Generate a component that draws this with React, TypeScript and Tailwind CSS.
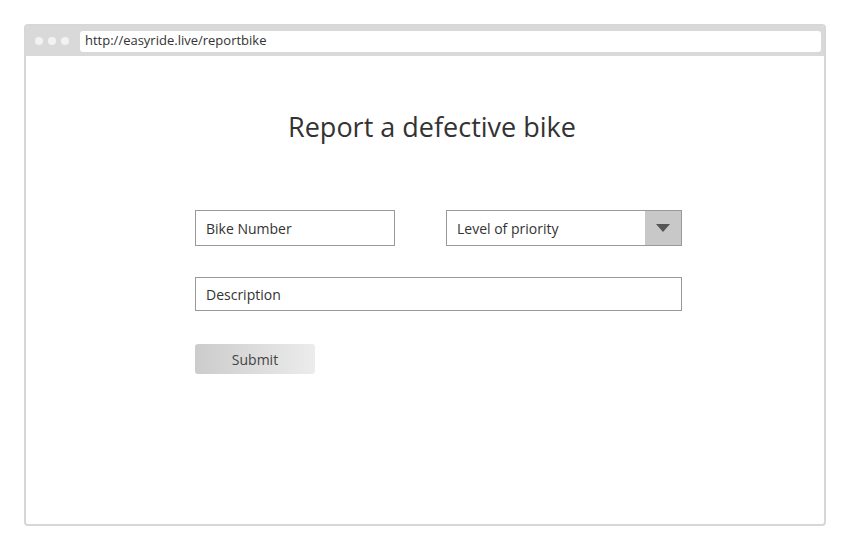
export default function App() {
  return (
    <div className="w-[850px] h-[550px] bg-white p-[24px]" style={{ fontFamily: '"Open Sans", "Noto Sans", sans-serif' }}>
      <div className="w-[802px] h-[502px] border-2 border-[#d7d7d7] rounded-[4px] flex flex-col overflow-hidden">
        <div className="h-[30px] bg-[#d9d9d9] flex items-center pl-[9px] pr-[3px] gap-[6px] shrink-0">
          <div className="flex gap-[5px]">
            <span className="w-[8px] h-[8px] rounded-full bg-[#f2f2f2]" />
            <span className="w-[8px] h-[8px] rounded-full bg-[#f2f2f2]" />
            <span className="w-[8px] h-[8px] rounded-full bg-[#f2f2f2]" />
          </div>
          <div className="ml-[5px] flex-1 h-[21px] bg-white rounded-[3px] flex items-center px-[5px] text-[13px] text-[#333]">
            http://easyride.live/reportbike
          </div>
        </div>
        <div className="flex-1 flex flex-col">
          <h1 className="mt-[51px] ml-[14px] text-center text-[27px] text-[#333] leading-[40px]">Report a defective bike</h1>
          <div className="ml-[169px] mt-[63px] w-[487px] flex flex-col text-[14px] text-[#333]">
            <div className="flex justify-between">
              <div className="w-[200px] h-[36px] border border-[#999] flex items-center px-[10px]">Bike Number</div>
              <div className="w-[236px] h-[36px] border border-[#999] flex">
                <div className="flex-1 flex items-center px-[10px]">Level of priority</div>
                <div className="w-[36px] bg-[#c8c8c8] flex items-center justify-center">
                  <svg width="14" height="8" viewBox="0 0 14 8"><path d="M0 0 L14 0 L7 8 Z" fill="#555" /></svg>
                </div>
              </div>
            </div>
            <div className="mt-[31px] h-[34px] border border-[#999] flex items-center px-[10px]">Description</div>
            <button className="mt-[33px] w-[120px] h-[30px] rounded-[3px] bg-gradient-to-r from-[#cccccc] to-[#ececec] text-[#444]">Submit</button>
          </div>
        </div>
      </div>
    </div>
  );
}
